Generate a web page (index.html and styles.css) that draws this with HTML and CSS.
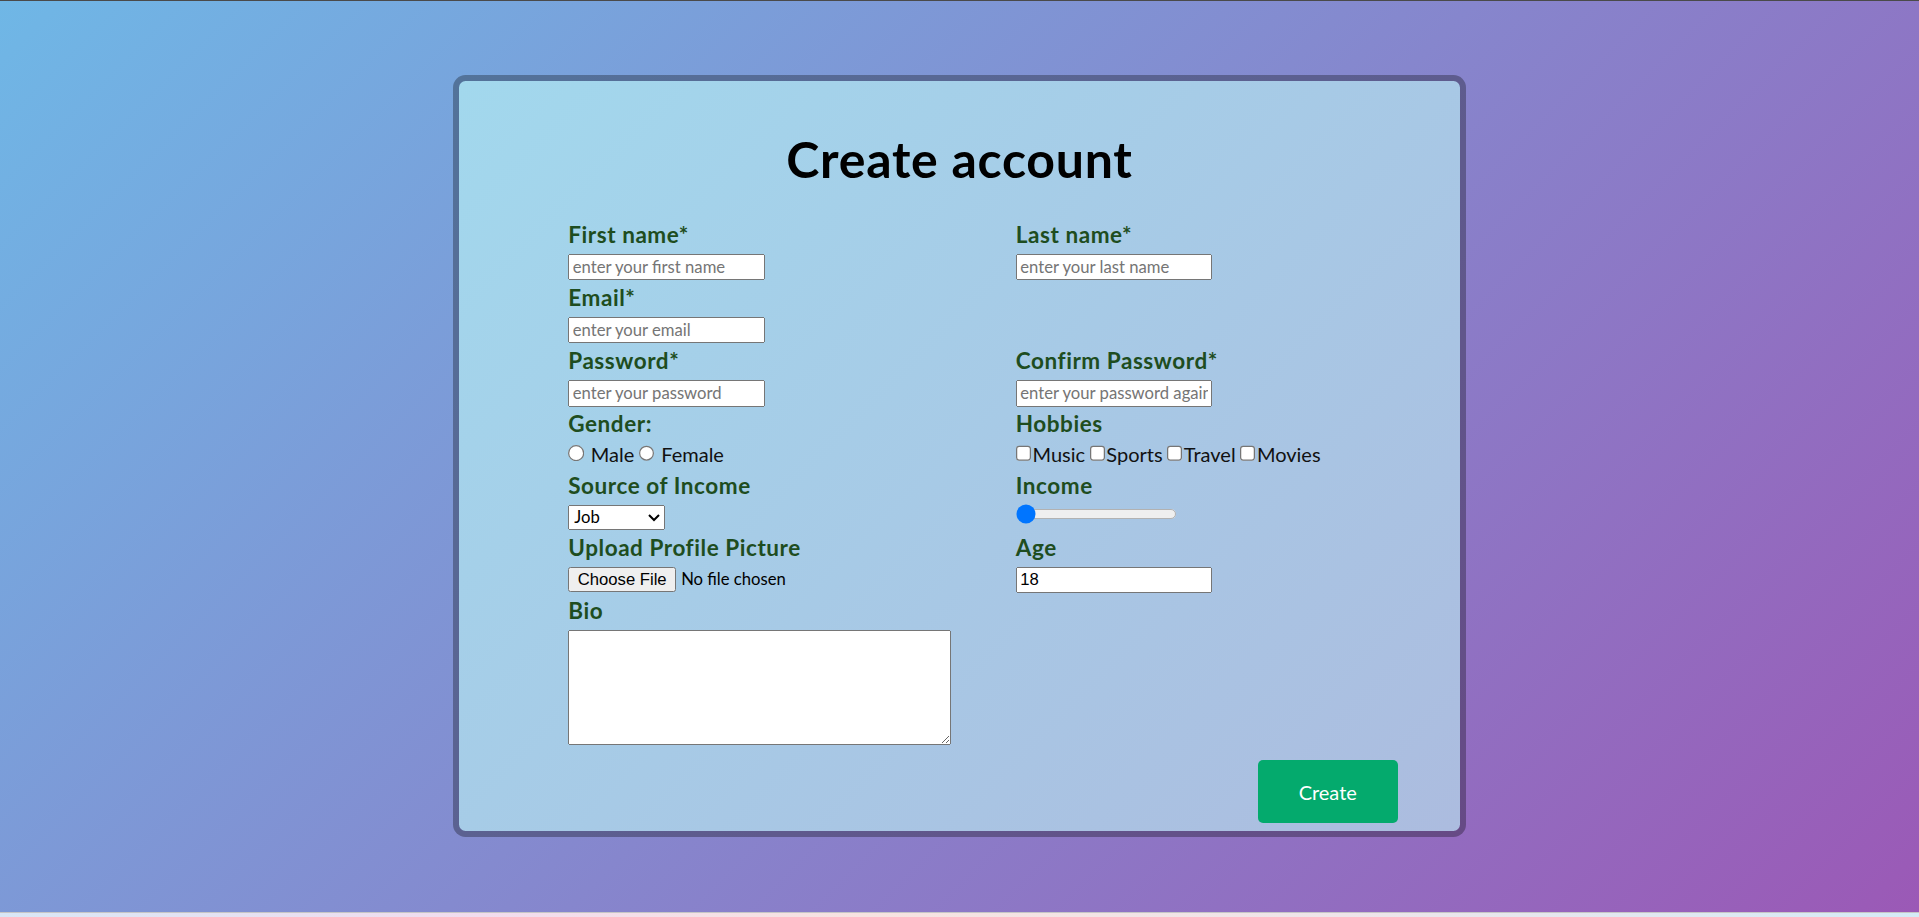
FILE: index.html
```html
<!DOCTYPE html>
<html lang="en">
<head>
<meta charset="utf-8">
<title>Create account</title>
<link rel="stylesheet" href="styles.css">
</head>
<body>
<div class="bg">
  <div class="card">
    <h1 class="title">Create account</h1>
    <form class="form">
      <div class="grid">
        <div class="field">
          <label class="label">First name*</label>
          <input class="text" type="text" placeholder="enter your first name">
        </div>
        <div class="field">
          <label class="label">Last name*</label>
          <input class="text" type="text" placeholder="enter your last name">
        </div>
        <div class="field">
          <label class="label">Email*</label>
          <input class="text" type="email" placeholder="enter your email">
        </div>
        <div class="field"></div>
        <div class="field">
          <label class="label">Password*</label>
          <input class="text" type="password" placeholder="enter your password">
        </div>
        <div class="field">
          <label class="label">Confirm Password*</label>
          <input class="text" type="password" placeholder="enter your password again">
        </div>
        <div class="field">
          <label class="label">Gender:</label>
          <div class="choices"><input class="radio" type="radio" name="g"><span class="opt">Male</span><input class="radio next" type="radio" name="g"><span class="opt">Female</span></div>
        </div>
        <div class="field">
          <label class="label">Hobbies</label>
          <div class="choices"><input class="check" type="checkbox"><span class="opt">Music</span><input class="check next" type="checkbox"><span class="opt">Sports</span><input class="check next" type="checkbox"><span class="opt">Travel</span><input class="check next" type="checkbox"><span class="opt">Movies</span></div>
        </div>
        <div class="field">
          <label class="label">Source of Income</label>
          <select class="select"><option>Job</option><option>Business</option><option>Other</option></select>
        </div>
        <div class="field">
          <label class="label">Income</label>
          <input class="range" type="range" min="0" max="100" value="0">
        </div>
        <div class="field">
          <label class="label">Upload Profile Picture</label>
          <input class="file" type="file">
        </div>
        <div class="field">
          <label class="label">Age</label>
          <input class="text age" type="number" value="18">
        </div>
        <div class="field">
          <label class="label">Bio</label>
          <textarea class="bio"></textarea>
        </div>
        <div class="field"></div>
      </div>
      <div class="actions">
        <button class="create" type="button">Create</button>
      </div>
    </form>
  </div>
</div>
<div class="strip"></div>
</body>
</html>
```

FILE: styles.css
```css
html, body {
  margin: 0;
  padding: 0;
}

body {
  font-family: Lato, "Noto Sans", sans-serif;
  background: #ffffff;
  overflow: hidden;
}

.bg {
  box-sizing: border-box;
  height: 912px;
  border-top: 1px solid #4a4a4a;
  padding-top: 74px;
  background: linear-gradient(135deg, #6fb7e6, #9b59b6);
}

.strip {
  height: 4px;
  border-top: 1px solid #c6c6c6;
  background: linear-gradient(90deg, #d9e7f6 0%, #f2dcee 25%, #f7e3e1 45%, #efe5ea 70%, #d5ebf7 100%);
}

.card {
  zoom: 1.25;
  box-sizing: border-box;
  width: 810px;
  margin: 0 auto;
  border: 5px solid rgba(0, 0, 0, 0.3);
  border-radius: 10px;
  background: linear-gradient(135deg, #a2d8ed, #acbcdf);
  background-clip: padding-box;
  padding: 38px 0 6.4px;
}

.title {
  margin: 0 0 24px;
  font-size: 40px;
  line-height: 48px;
  font-weight: 700;
  letter-spacing: 0.6px;
  text-align: center;
  color: #000;
}

.grid {
  display: grid;
  grid-template-columns: 358px 358px;
  row-gap: 1.4px;
  padding-left: 87.2px;
}

.field {
  display: flex;
  flex-direction: column;
  align-items: flex-start;
}

.label {
  font-size: 18px;
  line-height: 25px;
  font-weight: 700;
  letter-spacing: 0.45px;
  color: #1e4d20;
  margin-bottom: 3.2px;
}

.text {
  box-sizing: border-box;
  width: 157px;
  height: 21px;
  margin: 0;
  font-family: Lato, "Noto Sans", sans-serif;
  font-size: 13.33px;
}

.age {
  font-family: "Liberation Sans", Arial, sans-serif;
}

.choices {
  height: 19.5px;
  font-size: 16px;
  line-height: 17px;
  color: #111;
  white-space: nowrap;
}

.radio {
  margin: 0 5px 0 0;
}

.check {
  margin: 0 0.4px 0 0;
}

.next {
  margin-left: 3.6px;
}

.select {
  width: 77px;
  height: 20px;
  margin: 0;
  font-family: Lato, "Noto Sans", sans-serif;
  font-size: 13.33px;
}

.range {
  width: 129px;
  margin: -1px 0 0;
}

.file {
  margin: 0;
  font-family: Lato, "Noto Sans", sans-serif;
  font-size: 13.33px;
}

.file::file-selector-button {
  font-family: "Liberation Sans", Arial, sans-serif;
  font-size: 13.33px;
  height: 20px;
}

.bio {
  box-sizing: border-box;
  width: 306px;
  height: 92px;
  margin: 0;
}

.actions {
  display: flex;
  justify-content: flex-end;
  padding-right: 49.6px;
  margin-top: 12px;
}

.create {
  width: 112px;
  height: 50.4px;
  border: 0;
  border-radius: 4px;
  background: #04aa6d;
  color: #fff;
  font-family: Lato, "Noto Sans", sans-serif;
  font-size: 16px;
  cursor: pointer;
}
```
